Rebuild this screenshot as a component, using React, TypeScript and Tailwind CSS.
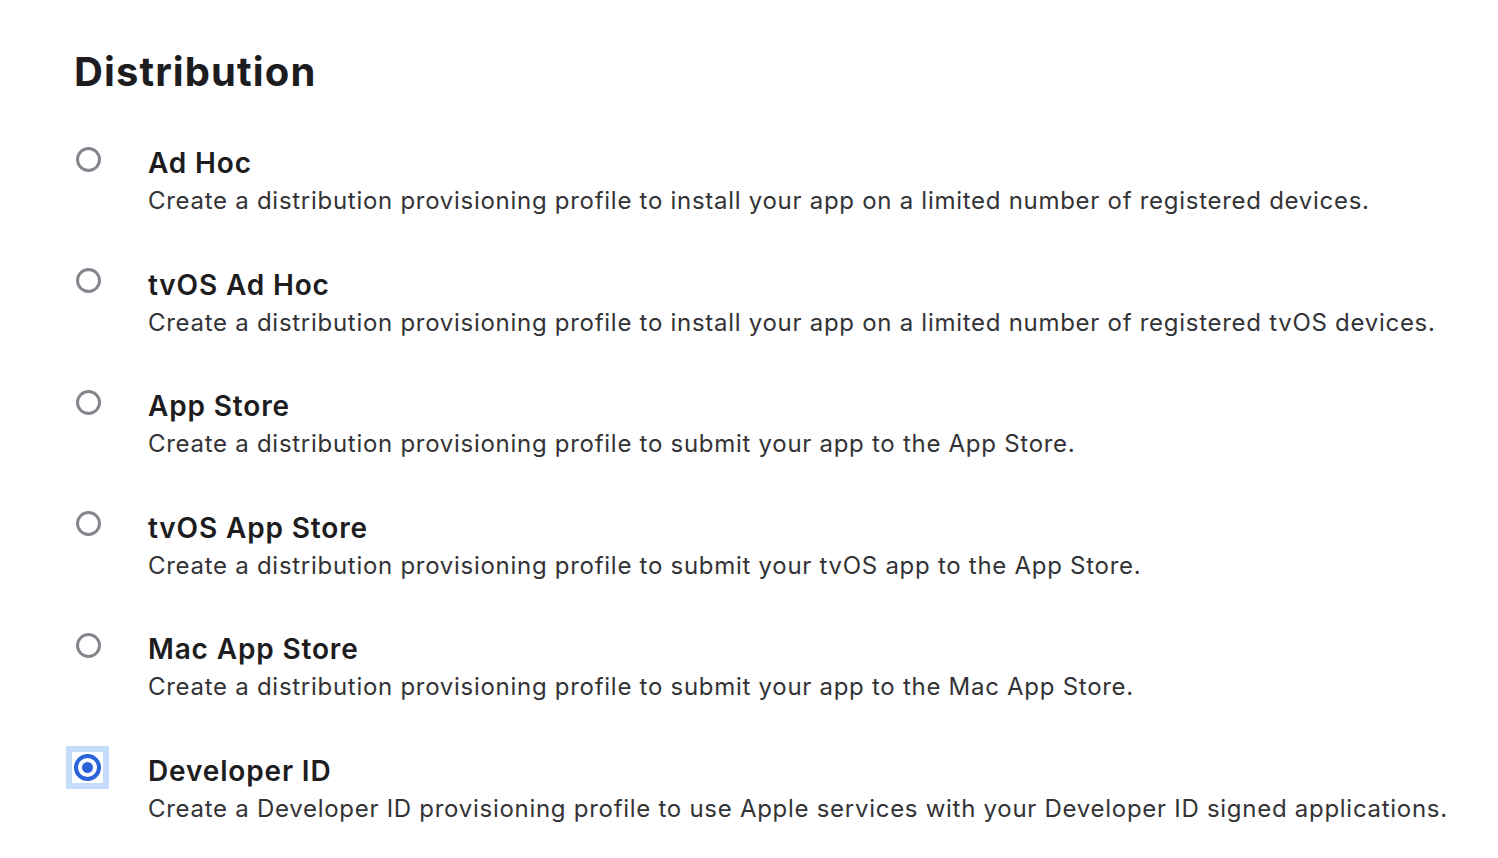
const options = [
  {
    title: 'Ad Hoc',
    description:
      'Create a distribution provisioning profile to install your app on a limited number of registered devices.',
  },
  {
    title: 'tvOS Ad Hoc',
    description:
      'Create a distribution provisioning profile to install your app on a limited number of registered tvOS devices.',
  },
  {
    title: 'App Store',
    description: 'Create a distribution provisioning profile to submit your app to the App Store.',
  },
  {
    title: 'tvOS App Store',
    description: 'Create a distribution provisioning profile to submit your tvOS app to the App Store.',
  },
  {
    title: 'Mac App Store',
    description: 'Create a distribution provisioning profile to submit your app to the Mac App Store.',
  },
  {
    title: 'Developer ID',
    description:
      'Create a Developer ID provisioning profile to use Apple services with your Developer ID signed applications.',
  },
];

function Radio({ checked }: { checked: boolean }) {
  if (checked) {
    return (
      <div className="-ml-[9px] -mt-[7px] w-[43px] h-[43px] bg-[#c6dcfb] p-[6px] shrink-0">
        <div className="w-[31px] h-[31px] bg-white flex items-center justify-center">
          <div className="w-[27px] h-[27px] rounded-full border-[4px] border-[#2b63d9] flex items-center justify-center">
            <div className="w-[11px] h-[11px] rounded-full bg-[#2b63d9]" />
          </div>
        </div>
      </div>
    );
  }
  return (
    <div className="w-[26px] h-[26px] mt-[1px] flex items-center justify-center shrink-0">
      <div className="w-[25px] h-[25px] rounded-full border-[3.5px] border-[#85858e]" />
    </div>
  );
}

export default function App() {
  const selected = 5;

  return (
    <div
      className="min-h-screen bg-white pl-[75px] pt-[48px]"
      style={{ fontFamily: 'Inter, "Noto Sans", sans-serif' }}
    >
      <h1 className="-ml-[1px] text-[40px] leading-[48px] font-bold text-[#1d1d1f] tracking-[1.1px]">
        Distribution
      </h1>

      <div className="mt-[49px] flex flex-col gap-[45.6px]">
        {options.map((opt, i) => (
          <div key={opt.title} className="flex items-start">
            <div className="w-[73px] shrink-0">
              <Radio checked={i === selected} />
            </div>
            <div>
              <div className="text-[28px] leading-[36px] font-semibold text-[#1d1d1f] tracking-[0.85px]">
                {opt.title}
              </div>
              <div className="text-[24px] leading-[40px] text-[#333336] tracking-[0.72px]">
                {opt.description}
              </div>
            </div>
          </div>
        ))}
      </div>
    </div>
  );
}
